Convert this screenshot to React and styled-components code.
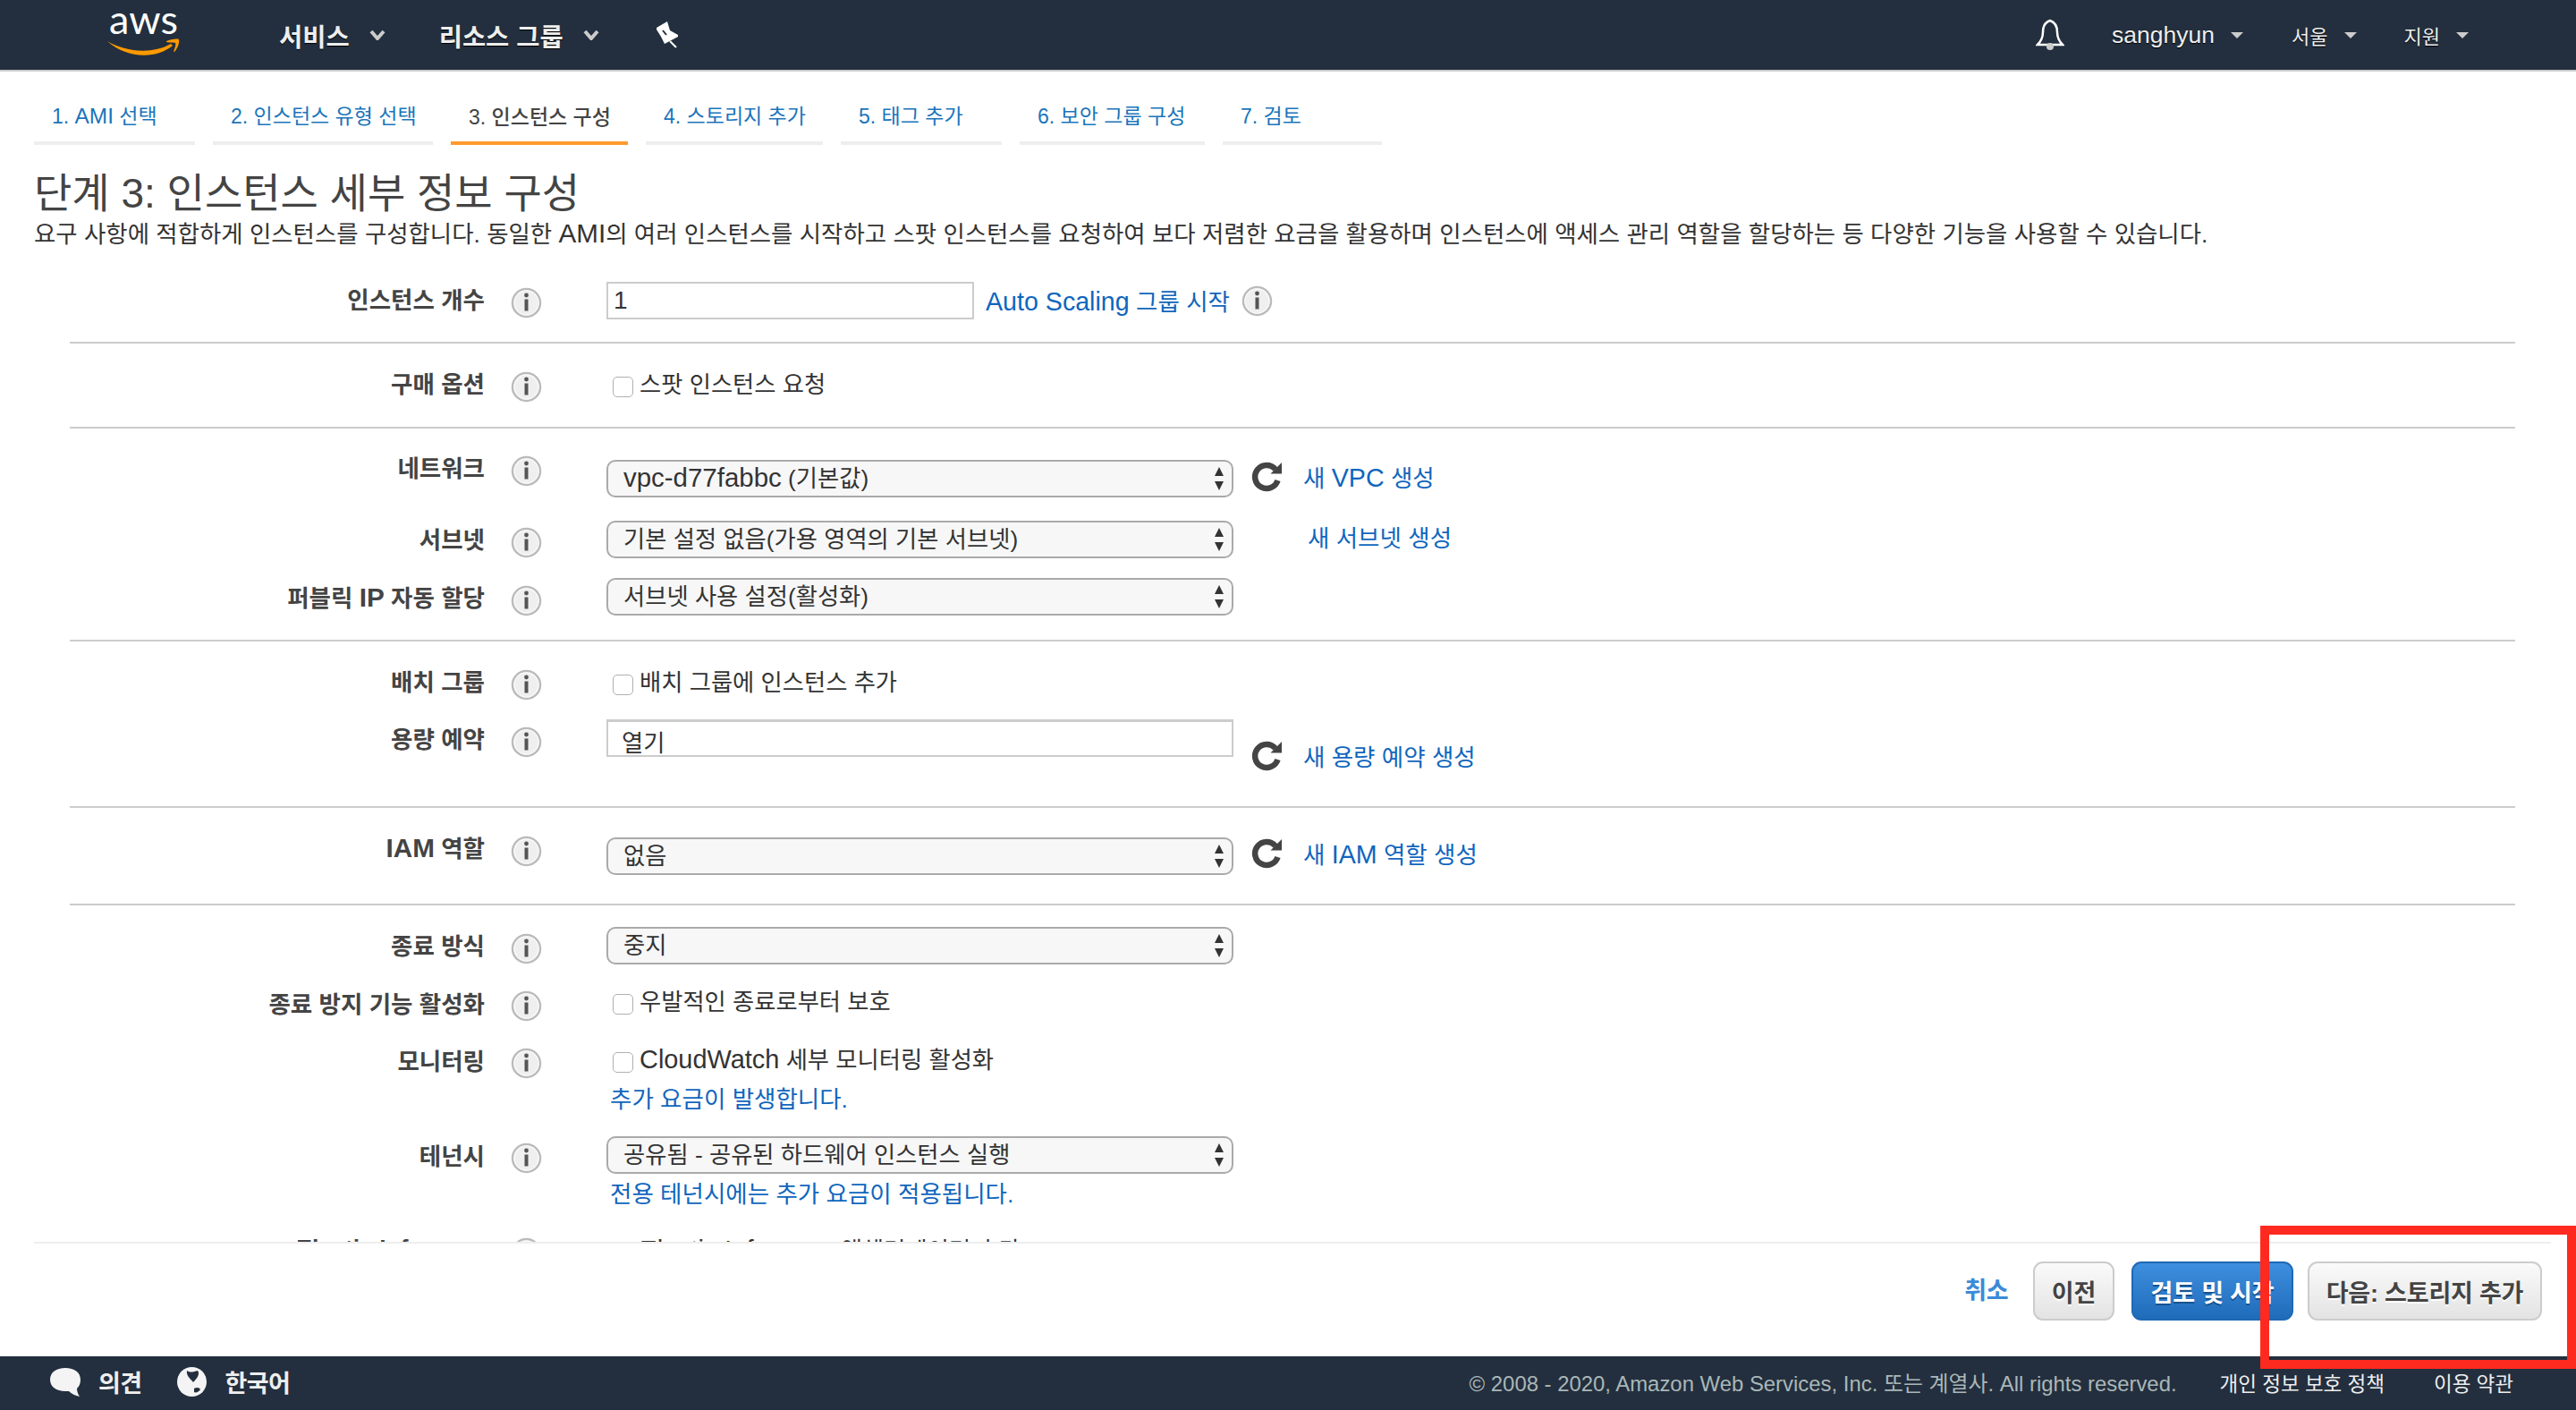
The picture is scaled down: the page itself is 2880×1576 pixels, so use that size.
import React from 'react';
import styled, { createGlobalStyle } from 'styled-components';

const FONT = '"Liberation Sans", "Noto Sans CJK KR", sans-serif';

const GlobalStyle = createGlobalStyle`
  html, body {
    margin: 0;
    padding: 0;
    background: #fff;
    font-family: ${FONT};
  }
  * {
    box-sizing: border-box;
  }
`;

const Page = styled.div`
  position: relative;
  width: 2880px;
  height: 1576px;
  overflow: hidden;
  display: flex;
  flex-direction: column;
  color: #444;
`;

/* top navigation */
const TopNav = styled.div`
  height: 80px;
  flex: none;
  display: flex;
  align-items: center;
  background: #232f3e;
  border-bottom: 2px solid #ccc;
  padding: 0 120px;
`;

const Logo = styled.div`
  width: 82px;
  height: 50px;
  position: relative;
  margin-right: 110px;
  margin-top: -2px;
`;

const LogoText = styled.span`
  position: absolute;
  left: 2px;
  top: -12px;
  font-family: Lato, ${FONT};
  font-size: 45px;
  line-height: 40px;
  color: #fff;
`;

const LogoSmile = styled.svg`
  position: absolute;
  left: 0;
  bottom: 0;
`;

const NavMenu = styled.div`
  display: flex;
  align-items: center;
  gap: 22px;
  margin-right: 60px;
  font-size: 28.5px;
  font-weight: 700;
  color: #eee;
  text-shadow: 0 1px 1px #000;
`;

const PinIcon = styled.svg`
  flex: none;
  margin-left: 4px;
`;

const NavRight = styled.div`
  margin-left: auto;
  display: flex;
  align-items: center;
`;

const NavItem = styled.div`
  display: flex;
  align-items: center;
  gap: 18px;
  margin-left: ${(props) => props.$ml}px;
  font-size: ${(props) => props.$size || 22}px;
  color: #eee;
  text-shadow: 0 1px 1px #000;
`;

const Caret = styled.span`
  width: 0;
  height: 0;
  border-left: 7px solid transparent;
  border-right: 7px solid transparent;
  border-top: 7px solid #ccc;
`;

/* main scrolling area */
const Main = styled.div`
  height: 1308px;
  flex: none;
  overflow: hidden;
  padding: 0 68px 0 38px;
`;

const Tabs = styled.div`
  display: flex;
  gap: 20px;
`;

const Tab = styled.div`
  width: ${(props) => props.$w}px;
  height: 82px;
  padding: ${(props) => (props.$active ? 36 : 35)}px 0 0 20px;
  border-bottom: 4px solid ${(props) => (props.$active ? '#ff9a2e' : '#eee')};
  font-size: 23px;
  line-height: 30px;
  white-space: nowrap;
  color: ${(props) => (props.$active ? '#444' : '#1b75bb')};
  font-weight: ${(props) => (props.$active ? 500 : 400)};
`;

const Title = styled.h1`
  margin: 26px 0 0;
  font-size: 46px;
  line-height: 56px;
  font-weight: 400;
  color: #444;
  white-space: nowrap;
`;

const Desc = styled.p`
  margin: 0;
  font-size: 26.45px;
  line-height: 36px;
  color: #333;
  white-space: nowrap;
`;

const Lat = styled.span`
  font-size: ${(props) => props.$size || 1.12}em;
  line-height: 1;
`;

const Form = styled.div`
  margin: 35px 0 0 40px;
`;

const FormSection = styled.div`
  height: ${(props) => props.$h}px;
  padding-top: ${(props) => props.$pt || 0}px;
  border-bottom: ${(props) => (props.$open ? 'none' : '2px solid #ccc')};
`;

const FormRow = styled.div`
  display: grid;
  grid-template-columns: 464px 136px 1fr;
  align-items: start;
  height: ${(props) => props.$h}px;
`;

const RowLabel = styled.div`
  margin-top: ${(props) => props.$l || 0}px;
  padding-top: 1px;
  text-align: right;
  font-size: 26.5px;
  line-height: 36px;
  font-weight: 700;
  color: #444;
  white-space: nowrap;
`;

const InfoSlot = styled.div`
  margin-top: ${(props) => (props.$i || 0) + 4}px;
  padding-left: 29px;
`;

const InfoSvg = styled.svg`
  display: block;
  flex: none;
`;

const RowControl = styled.div`
  margin-top: ${(props) => props.$c || 0}px;
  font-size: 26.3px;
  color: #333;
`;

const ControlLine = styled.div`
  display: flex;
  align-items: flex-start;
`;

const TextInput = styled.input`
  display: block;
  flex: none;
  width: 411px;
  height: 42px;
  padding: 0 6px;
  margin: 0;
  border: 2px solid #ccc;
  border-radius: 0;
  font-family: ${FONT};
  font-size: 28px;
  color: #333;
  outline: none;
`;

const OpenBox = styled.div`
  flex: none;
  width: 701px;
  height: 42px;
  padding: 6px 15px 0;
  border: 2px solid #ccc;
  border-top-width: 3px;
  line-height: 36px;
`;

const SelectBox = styled.div`
  position: relative;
  flex: none;
  width: 701px;
  height: 42px;
  padding-left: 17px;
  background: #f7f7f7;
  border: 2px solid #aaa;
  border-radius: 10px;
  line-height: 38px;
  white-space: nowrap;
  &::before,
  &::after {
    content: '';
    position: absolute;
    right: 9px;
    width: 0;
    height: 0;
    border-left: 5.5px solid transparent;
    border-right: 5.5px solid transparent;
  }
  &::before {
    top: 6px;
    border-bottom: 10px solid #333;
  }
  &::after {
    bottom: 6px;
    border-top: 10px solid #333;
  }
`;

const SideLink = styled.div`
  display: flex;
  align-items: center;
  gap: ${(props) => props.$gap || 22}px;
  height: 36px;
  margin: ${(props) => props.$t || 0}px 0 0 ${(props) => props.$ml || 20}px;
  white-space: nowrap;
`;

const BlueLink = styled.a`
  padding-top: 3px;
  color: #1066bd;
  font-size: 26.5px;
  line-height: 36px;
  white-space: nowrap;
`;

const CheckLine = styled.label`
  display: flex;
  align-items: flex-start;
  gap: 7px;
  padding-left: 7px;
  line-height: 36px;
  white-space: nowrap;
`;

const CheckBox = styled.span`
  flex: none;
  width: 23px;
  height: 23px;
  margin-top: 10px;
  background: #fff;
  border: 1px solid #b0b0b0;
  border-radius: 5px;
`;

const CheckText = styled.span`
  padding-top: 1px;
`;

const Note = styled.div`
  margin: ${(props) => props.$t}px 0 0 4px;
  line-height: 36px;
  color: #1066bd;
  font-size: 26.5px;
  white-space: nowrap;
`;

/* wizard actions */
const ActionBar = styled.div`
  height: 128px;
  flex: none;
  margin: 0 28px 0 38px;
  padding: 20px 10px 0 0;
  border-top: 2px solid #eee;
  display: flex;
  justify-content: flex-end;
  align-items: flex-start;
`;

const CancelLink = styled.a`
  margin: 15px 28px 0 0;
  font-size: 27px;
  line-height: 36px;
  font-weight: 700;
  letter-spacing: -0.5px;
  color: #3b8ad9;
`;

const ActionButton = styled.button`
  width: ${(props) => props.$w}px;
  height: 66px;
  margin-left: ${(props) => props.$ml || 0}px;
  padding: 0;
  font-family: ${FONT};
  font-size: 27px;
  font-weight: 700;
  letter-spacing: -0.2px;
  white-space: nowrap;
  border-radius: 11px;
  border: 2px solid ${(props) => (props.$primary ? '#1e69b5' : '#ccc')};
  color: ${(props) => (props.$primary ? '#fff' : '#444')};
  background: ${(props) =>
    props.$primary
      ? 'linear-gradient(#3e8fdf, #1f6bb9)'
      : 'linear-gradient(#fafafa, #e3e3e3)'};
  text-shadow: ${(props) =>
    props.$primary ? '0 2px 0 #16528f' : '0 2px 0 #fff'};
`;

/* page footer */
const Footer = styled.div`
  height: 60px;
  flex: none;
  display: flex;
  align-items: center;
  padding: 0 70px 3px 56px;
  background: #232f3e;
`;

const FooterLeft = styled.div`
  display: flex;
  align-items: center;
  color: #eee;
  font-size: 27px;
  font-weight: 700;
  letter-spacing: -0.6px;
`;

const FooterIcon = styled.svg`
  flex: none;
  margin-left: ${(props) => props.$ml || 0}px;
  margin-right: ${(props) => props.$mr}px;
`;

const FooterRight = styled.div`
  margin-left: auto;
  display: flex;
  align-items: center;
  font-size: 22.5px;
  white-space: nowrap;
`;

const Copyright = styled.span`
  color: #aab7b8;
  font-size: 23.9px;
  margin-right: 48px;
`;

const FooterLink = styled.a`
  color: #eee;
  margin-left: ${(props) => props.$ml || 0}px;
`;

/* screenshot annotation lying over the page */
const Highlight = styled.div`
  position: absolute;
  left: 2527px;
  top: 1370px;
  width: 353px;
  height: 160px;
  border: 10px solid #ff2a1f;
  pointer-events: none;
`;

const Info = () => (
  <InfoSvg width="35" height="35" viewBox="0 0 35 35">
    <circle cx="17.5" cy="17.5" r="15.5" fill="#efefef" stroke="#bbb" strokeWidth="2.5" />
    <circle cx="17.5" cy="17.5" r="13.6" fill="none" stroke="#fafafa" strokeWidth="1.2" />
    <circle cx="17.5" cy="9" r="2.4" fill="#555" />
    <rect x="15.5" y="13.5" width="4" height="13" fill="#555" />
  </InfoSvg>
);

const Refresh = () => (
  <svg width="36" height="34" viewBox="0 0 36 34">
    <path d="M27 8.5 A13 13 0 1 0 29.5 21" fill="none" stroke="#444" strokeWidth="6.5" />
    <path d="M34 1 L34 13.5 L21.5 13.5 Z" fill="#444" />
  </svg>
);

const Chevron = () => (
  <svg width="18" height="12" viewBox="0 0 18 12">
    <path d="M2 2 L9 10 L16 2" fill="none" stroke="#ccc" strokeWidth="4" />
  </svg>
);

const Row = ({ h, l, i = l, c, label, children }) => (
  <FormRow $h={h}>
    <RowLabel $l={l}>{label}</RowLabel>
    <InfoSlot $i={i}>
      <Info />
    </InfoSlot>
    <RowControl $c={c}>{children}</RowControl>
  </FormRow>
);

const Check = ({ children }) => (
  <CheckLine>
    <CheckBox />
    <CheckText>{children}</CheckText>
  </CheckLine>
);

const tabs = [
  { w: 180, text: <>1. <Lat $size={1.06}>AMI</Lat> 선택</> },
  { w: 246, text: '2. 인스턴스 유형 선택' },
  { w: 198, text: '3. 인스턴스 구성', active: true },
  { w: 198, text: '4. 스토리지 추가' },
  { w: 180, text: '5. 태그 추가' },
  { w: 207, text: '6. 보안 그룹 구성' },
  { w: 178, text: '7. 검토' },
];

const App = () => {
  return (
    <Page>
      <GlobalStyle />
      <TopNav>
        <Logo>
          <LogoText>aws</LogoText>
          <LogoSmile width="82" height="24" viewBox="0 0 82 24">
            <path d="M0 7 C20 19 50 22 71 10 L73 12 C55 27 22 27 0 7 Z" fill="#f90" />
            <path
              d="M66 7 C70 5 78 4 80 5 C81 9 78 16 75 19 C74 19 74 18 75 16 C76 13 77 10 76 9 C74 8 70 9 66 8 Z"
              fill="#f90"
            />
          </LogoSmile>
        </Logo>
        <NavMenu>
          서비스
          <Chevron />
        </NavMenu>
        <NavMenu>
          리소스 그룹
          <Chevron />
        </NavMenu>
        <PinIcon width="24" height="30" viewBox="0 0 24 30">
          <path d="M0 7 L12 0 L15 10 L24 15 L24 17 L9 25 L5 17 L0 9 Z" fill="#fff" />
          <path d="M15 22 L22 29" fill="none" stroke="#fff" strokeWidth="2" />
          <path d="M7 10 L11 15" fill="none" stroke="#232f3e" strokeWidth="2" />
        </PinIcon>
        <NavRight>
          <svg width="32" height="36" viewBox="0 0 32 36">
            <path
              d="M16 2 C10 4 8 9 8 15 C8 21 6 25 2 29 L30 29 C26 25 24 21 24 15 C24 9 22 4 16 2 Z"
              fill="none"
              stroke="#fff"
              strokeWidth="2.5"
            />
            <circle cx="16" cy="31" r="4" fill="#ccc" />
          </svg>
          <NavItem $ml={53} $size={26.5}>
            <span>sanghyun</span>
            <Caret />
          </NavItem>
          <NavItem $ml={54}>
            <span>서울</span>
            <Caret />
          </NavItem>
          <NavItem $ml={53}>
            <span>지원</span>
            <Caret />
          </NavItem>
        </NavRight>
      </TopNav>

      <Main>
        <Tabs>
          {tabs.map((tab, i) => (
            <Tab key={i} $w={tab.w} $active={tab.active}>
              {tab.text}
            </Tab>
          ))}
        </Tabs>
        <Title>단계 3: 인스턴스 세부 정보 구성</Title>
        <Desc>
          요구 사항에 적합하게 인스턴스를 구성합니다. 동일한 <Lat>AMI</Lat>의 여러 인스턴스를 시작하고 스팟
          인스턴스를 요청하여 보다 저렴한 요금을 활용하며 인스턴스에 액세스 관리 역할을 할당하는 등 다양한
          기능을 사용할 수 있습니다.
        </Desc>

        <Form>
          <FormSection $h={69}>
            <Row h={42} l={2} label="인스턴스 개수">
              <ControlLine>
                <TextInput defaultValue="1" />
                <SideLink $ml={13} $t={3} $gap={13}>
                  <BlueLink>
                    <Lat $size={1.08}>Auto Scaling</Lat> 그룹 시작
                  </BlueLink>
                  <Info />
                </SideLink>
              </ControlLine>
            </Row>
          </FormSection>

          <FormSection $h={95} $pt={27}>
            <Row h={42} label="구매 옵션">
              <Check>스팟 인스턴스 요청</Check>
            </Row>
          </FormSection>

          <FormSection $h={238} $pt={26}>
            <Row h={77} c={9} label="네트워크">
              <ControlLine>
                <SelectBox>
                  <Lat>vpc-d77fabbc</Lat> (기본값)
                </SelectBox>
                <SideLink $t={1}>
                  <Refresh />
                  <BlueLink>
                    새 <Lat $size={1.08}>VPC</Lat> 생성
                  </BlueLink>
                </SideLink>
              </ControlLine>
            </Row>
            <Row h={64} l={3} label="서브넷">
              <ControlLine>
                <SelectBox>기본 설정 없음(가용 영역의 기본 서브넷)</SelectBox>
                <SideLink $ml={83}>
                  <BlueLink>새 서브넷 생성</BlueLink>
                </SideLink>
              </ControlLine>
            </Row>
            <Row h={42} l={4} label={<>퍼블릭 <Lat>IP</Lat> 자동 할당</>}>
              <SelectBox>서브넷 사용 설정(활성화)</SelectBox>
            </Row>
          </FormSection>

          <FormSection $h={186} $pt={27}>
            <Row h={60} label="배치 그룹">
              <Check>배치 그룹에 인스턴스 추가</Check>
            </Row>
            <Row h={42} l={4} label="용량 예약">
              <ControlLine>
                <OpenBox>열기</OpenBox>
                <SideLink $t={23}>
                  <Refresh />
                  <BlueLink>새 용량 예약 생성</BlueLink>
                </SideLink>
              </ControlLine>
            </Row>
          </FormSection>

          <FormSection $h={109} $pt={27}>
            <Row h={48} c={6} label={<><Lat>IAM</Lat> 역할</>}>
              <ControlLine>
                <SelectBox>없음</SelectBox>
                <SideLink>
                  <Refresh />
                  <BlueLink>
                    새 <Lat $size={1.08}>IAM</Lat> 역할 생성
                  </BlueLink>
                </SideLink>
              </ControlLine>
            </Row>
          </FormSection>

          <FormSection $h={400} $pt={24} $open>
            <Row h={65} l={3} label="종료 방식">
              <SelectBox>중지</SelectBox>
            </Row>
            <Row h={65} l={3} i={2} label="종료 방지 기능 활성화">
              <Check>우발적인 종료로부터 보호</Check>
            </Row>
            <Row h={104} l={2} i={1} label="모니터링">
              <Check>
                <Lat $size={1.1}>CloudWatch</Lat> 세부 모니터링 활성화
              </Check>
              <Note $t={8}>추가 요금이 발생합니다.</Note>
            </Row>
            <Row h={106} l={4} i={3} label="테넌시">
              <SelectBox>공유됨 - 공유된 하드웨어 인스턴스 실행</SelectBox>
              <Note $t={5}>전용 테넌시에는 추가 요금이 적용됩니다.</Note>
            </Row>
            <Row h={42} l={0} i={3} c={3} label="Elastic Inference">
              <Check>
                <Lat>Elastic Inference</Lat> 액셀러레이터 추가
              </Check>
            </Row>
          </FormSection>
        </Form>
      </Main>

      <ActionBar>
        <CancelLink>취소</CancelLink>
        <ActionButton $w={91}>이전</ActionButton>
        <ActionButton $w={181} $ml={19} $primary>
          검토 및 시작
        </ActionButton>
        <ActionButton $w={262} $ml={16}>
          다음: 스토리지 추가
        </ActionButton>
      </ActionBar>

      <Footer>
        <FooterLeft>
          <FooterIcon $mr={20} width="34" height="32" viewBox="0 0 34 32">
            <path
              d="M17 0 C27 0 34 5 34 13 C34 18 32 21 30 23 C30 26 31 29 33 32 C28 31 24 29 21 26 C19 26 18 26 17 26 C7 26 0 21 0 13 C0 5 7 0 17 0 Z"
              fill="#f4f4f4"
            />
          </FooterIcon>
          의견
          <FooterIcon $ml={40} $mr={20} width="33" height="33" viewBox="0 0 33 33">
            <circle cx="16.5" cy="16.5" r="16.5" fill="#f4f4f4" />
            <path d="M11 4 C15 7 19 5 23 4 C26 8 22 13 18 17 C15 13 10 10 11 4 Z" fill="#232f3e" />
            <path d="M19 24 C22 22 25 23 26 25 C24 28 21 29 19 28 Z" fill="#232f3e" />
          </FooterIcon>
          한국어
        </FooterLeft>
        <FooterRight>
          <Copyright>© 2008 - 2020, Amazon Web Services, Inc. 또는 계열사. All rights reserved.</Copyright>
          <FooterLink>개인 정보 보호 정책</FooterLink>
          <FooterLink $ml={55}>이용 약관</FooterLink>
        </FooterRight>
      </Footer>

      <Highlight />
    </Page>
  );
};

export default App;
